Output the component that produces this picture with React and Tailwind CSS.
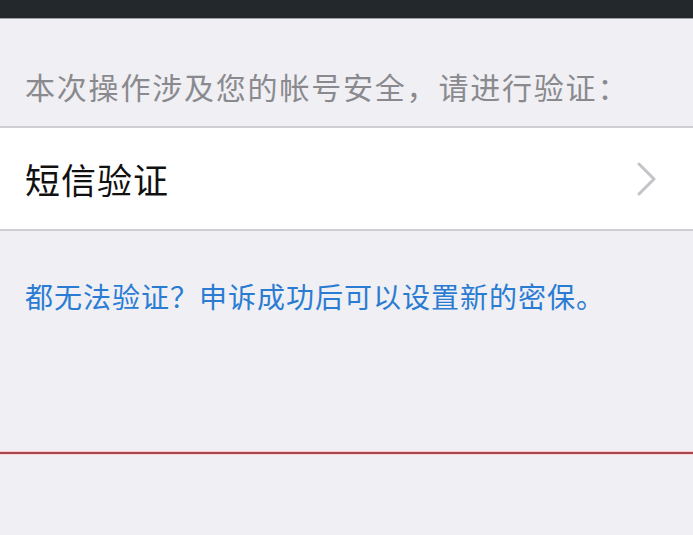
export default function App() {
  return (
    <div
      className="min-h-[535px] w-full overflow-hidden bg-[#efeff4]"
      style={{ fontFamily: '"Noto Sans CJK SC", "Noto Sans", sans-serif' }}
    >
      <div className="h-[18px] bg-[#23282d]" />
      <div className="h-px bg-[#9da1a6]" />

      <div className="flex h-[107px] items-end pb-[20px] pl-[25px]">
        <p className="text-[30px] leading-[40px] tracking-[1.8px] text-[#8a8a8e]">
          本次操作涉及您的帐号安全，请进行验证：
        </p>
      </div>

      <div className="flex h-[105px] items-center justify-between border-y-2 border-[#cfcfd3] bg-white pl-[25px] pr-[36px]">
        <span className="text-[35px] leading-[44px] tracking-[1px] text-[#111]">短信验证</span>
        <svg width="20" height="34" viewBox="0 0 20 34" fill="none">
          <path d="M2 2 L17 17 L2 32" stroke="#c4c4c8" strokeWidth="3" strokeLinecap="round" strokeLinejoin="round" />
        </svg>
      </div>

      <p className="mt-[45px] pl-[25px] text-[28px] leading-[40px] tracking-[1px] text-[#2a7cd3]">
        都无法验证？申诉成功后可以设置新的密保。
      </p>

      <div className="mt-[135px] flex flex-col">
        <div className="h-px bg-[#f6c9cd]" />
        <div className="h-[2px] bg-[#a8454f]" />
        <div className="h-px bg-[#f8d4d7]" />
      </div>
    </div>
  );
}
